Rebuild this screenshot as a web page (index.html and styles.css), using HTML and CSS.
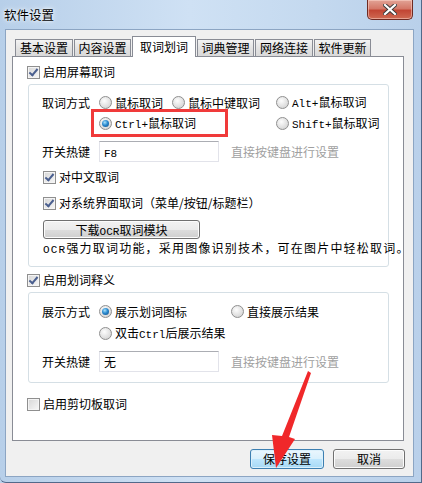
FILE: index.html
```html
<!DOCTYPE html>
<html lang="zh-CN">
<head>
    <meta charset="UTF-8">
    <title>软件设置</title>
    <link rel="stylesheet" href="styles.css">
</head>
<body>

<div class="window">
    <!-- 标题栏 -->
    <div class="titlebar">
        <span class="title">软件设置</span>
        <div class="close">
            <svg width="14" height="11" viewBox="0 0 14 11">
                <path d="M2 1 L12 10 M12 1 L2 10" stroke="#3a3a3a" stroke-width="4" stroke-linecap="square"/>
                <path d="M2 1 L12 10 M12 1 L2 10" stroke="#ffffff" stroke-width="2.2" stroke-linecap="square"/>
            </svg>
        </div>
    </div>

    <div class="client">
        <!-- 选项卡 -->
        <div class="tabs">
            <div class="tab">基本设置</div>
            <div class="tab">内容设置</div>
            <div class="tab active">取词划词</div>
            <div class="tab">词典管理</div>
            <div class="tab">网络连接</div>
            <div class="tab">软件更新</div>
        </div>

        <div class="panel">
            <label class="check top-check"><span class="cb on"></span><span>启用屏幕取词</span></label>

            <!-- 屏幕取词设置 -->
            <div class="group g1">
                <div class="opt-grid grid1">
                    <span class="lbl">取词方式</span>
                    <label class="radio"><span class="rb"></span><span>鼠标取词</span></label>
                    <label class="radio"><span class="rb"></span><span>鼠标中键取词</span></label>
                    <label class="radio"><span class="rb"></span><span><span class="en">Alt+</span>鼠标取词</span></label>
                    <label class="radio span2"><span class="rb on"></span><span><span class="en">Ctrl+</span>鼠标取词</span></label>
                    <label class="radio"><span class="rb"></span><span><span class="en">Shift+</span>鼠标取词</span></label>
                </div>
                <div class="hotkey hk1">
                    <span class="lbl">开关热键</span>
                    <div class="input"><span class="en">F8</span></div>
                    <span class="hint">直接按键盘进行设置</span>
                </div>
                <label class="check sub c1"><span class="cb on"></span><span>对中文取词</span></label>
                <label class="check sub c2"><span class="cb on"></span><span>对系统界面取词（菜单/按钮/标题栏）</span></label>
                <div class="btn ocr-btn">下载<span class="en">OCR</span>取词模块</div>
                <p class="ocr-note"><span class="en">OCR</span>强力取词功能，采用图像识别技术，可在图片中轻松取词。</p>
            </div>

            <label class="check mid-check"><span class="cb on"></span><span>启用划词释义</span></label>

            <!-- 划词释义设置 -->
            <div class="group g2">
                <div class="opt-grid grid2">
                    <span class="lbl">展示方式</span>
                    <label class="radio"><span class="rb on"></span><span>展示划词图标</span></label>
                    <label class="radio"><span class="rb"></span><span>直接展示结果</span></label>
                    <label class="radio span2"><span class="rb"></span><span>双击<span class="en">Ctrl</span>后展示结果</span></label>
                </div>
                <div class="hotkey hk2">
                    <span class="lbl">开关热键</span>
                    <div class="input">无</div>
                    <span class="hint">直接按键盘进行设置</span>
                </div>
            </div>

            <label class="check bottom-check"><span class="cb"></span><span>启用剪切板取词</span></label>
        </div>

        <div class="actions">
            <div class="btn default">保存设置</div>
            <div class="btn">取消</div>
        </div>
    </div>

    <!-- 标注 -->
    <div class="mark"></div>
    <svg class="arrow" width="60" height="110" viewBox="0 0 60 110">
        <polygon points="46,0 49,2 27,66 33,68 14,97 10,64 20,65" fill="#f0282a"/>
    </svg>
</div>

</body>
</html>
```

FILE: styles.css
```css
* {
    box-sizing: border-box;
}
body {
    margin: 0;
    font-family: "Noto Sans CJK SC", "Noto Sans", sans-serif;
    font-size: 12px;
    line-height: 16px;
    color: #000;
    background: #bcd3ec;
}
.en {
    font-family: "Liberation Mono", monospace;
    font-size: 11px;
}
.window {
    position: relative;
    width: 422px;
    height: 483px;
    overflow: hidden;
    background: linear-gradient(to right, #b7cfe9 0%, #cfe1f4 45%, #c4d9ef 75%, #b9d0ea 100%);
    border-right: 1px solid #52698a;
    border-bottom: 1px solid #52698a;
    border-bottom-left-radius: 6px;
}
.titlebar {
    height: 29px;
    display: flex;
    justify-content: space-between;
    align-items: flex-start;
}
.title {
    padding: 7px 0 0 4px;
    font-size: 12.5px;
    text-shadow: 0 0 6px #ffffff, 0 0 3px #ffffff;
}
.close {
    width: 46px;
    height: 20px;
    margin-right: 8px;
    display: flex;
    align-items: center;
    justify-content: center;
    border: 1px solid #6e2a22;
    border-top: none;
    border-radius: 0 0 5px 5px;
    background: linear-gradient(#e2a396 0%, #d47868 45%, #c24634 55%, #cf6a52 100%);
    box-shadow: inset 0 0 0 1px rgba(255, 220, 210, 0.5);
}
.client {
    margin-left: 5px;
    width: 409px;
    height: 448px;
    padding: 6px 8px 0 6px;
    background: #f0f0f0;
    border: 1px solid #8ca5c3;
}

/* 选项卡 */
.tabs {
    display: flex;
    align-items: flex-end;
    gap: 1px;
    height: 20px;
    padding-left: 3px;
}
.tab {
    width: 58px;
    height: 17px;
    line-height: 16px;
    text-align: center;
    border: 1px solid #898c95;
    border-bottom: none;
    background: linear-gradient(#f3f3f3, #e3e3e3 50%, #d9d9d9);
}
.tab:nth-child(2), .tab:nth-child(4), .tab:nth-child(6) {
    width: 57px;
}
.tab.active {
    width: 64px;
    height: 21px;
    line-height: 19px;
    margin-bottom: -1px;
    position: relative;
    z-index: 1;
    background: #fff;
}
.panel {
    width: 392px;
    height: 385px;
    padding: 5px 0 0 14px;
    background: #fff;
    border: 1px solid #898c95;
}

/* 复选框、单选框 */
.check, .radio {
    display: flex;
    align-items: center;
    height: 20px;
    white-space: nowrap;
}
.cb {
    width: 13px;
    height: 13px;
    flex: none;
    margin-right: 3px;
    border: 1px solid #8f8f8f;
    background: linear-gradient(135deg, #d6d6d6, #f7f7f7);
    box-shadow: inset 0 0 0 1px #f4f4f4;
    position: relative;
}
.cb.on::after {
    content: "";
    position: absolute;
    left: 3px;
    top: 0;
    width: 3px;
    height: 7px;
    border: solid #4a5f8f;
    border-width: 0 2px 2px 0;
    transform: rotate(40deg);
}
.rb {
    width: 13px;
    height: 13px;
    flex: none;
    margin-right: 3px;
    border-radius: 50%;
    border: 1px solid #8f8f8f;
    background: radial-gradient(circle at 40% 35%, #fdfdfd, #dadada 70%, #cfcfcf);
    position: relative;
}
.rb.on::after {
    content: "";
    position: absolute;
    left: 2px;
    top: 2px;
    width: 7px;
    height: 7px;
    border-radius: 50%;
    background: radial-gradient(circle at 40% 35%, #a9e2fb, #2a8ad0 45%, #114a80);
}
.mid-check {
    margin-top: 3px;
}
.bottom-check {
    margin-top: 11px;
}

/* 分组框 */
.group {
    width: 361px;
    margin-left: 1px;
    margin-top: 2px;
    padding: 7px 0 8px 13px;
    border: 1px solid #d5dfe5;
    border-radius: 3px;
}
.g2 {
    padding-top: 8px;
    padding-bottom: 10px;
}
.opt-grid {
    display: grid;
    grid-template-rows: 21px 21px;
    align-items: center;
}
.grid1 {
    grid-template-columns: 57px 73px 104px 1fr;
}
.grid2 {
    grid-template-columns: 57px 132px 1fr;
    row-gap: 1px;
}
.lbl {
    white-space: nowrap;
}
.opt-grid .lbl {
    align-self: start;
    line-height: 21px;
}
.opt-grid .span2 {
    grid-column: 2 / 4;
}
.hotkey {
    display: flex;
    align-items: center;
    height: 21px;
    margin-top: 7px;
}
.hotkey .lbl {
    width: 57px;
}
.input {
    width: 120px;
    height: 21px;
    padding-left: 4px;
    line-height: 19px;
    background: #fff;
    border: 1px solid #e2e3ea;
    border-top-color: #abadb3;
}
.hint {
    margin-left: 12px;
    color: #a0a0a0;
}
.sub {
    margin-left: 1px;
}
.c1 {
    margin-top: 5px;
}
.c2 {
    margin-top: 6px;
}

/* 按钮 */
.btn {
    height: 19px;
    line-height: 17px;
    text-align: center;
    border: 1px solid #707070;
    border-radius: 3px;
    background: linear-gradient(#f2f2f2 0%, #ebebeb 50%, #dddddd 51%, #cfcfcf 100%);
    box-shadow: inset 0 0 0 1px #fcfcfc;
}
.ocr-btn {
    width: 157px;
    margin-top: 7px;
    margin-left: 1px;
}
.ocr-note {
    margin: 1px 0 0 1px;
    line-height: 16px;
    letter-spacing: 1.2px;
    white-space: nowrap;
}
.actions {
    display: flex;
    justify-content: flex-end;
    gap: 9px;
    margin-top: 8px;
}
.actions .btn {
    width: 72px;
    height: 20px;
    line-height: 18px;
}
.actions .btn.default {
    width: 74px;
    border-color: #3c7fb1;
    background: linear-gradient(#eaf6fd 0%, #d9f0fc 50%, #bee6fd 51%, #a7d9f5 100%);
    box-shadow: inset 0 0 0 1px #dcf0fb;
}

/* 标注 */
.mark {
    position: absolute;
    left: 91px;
    top: 109px;
    width: 137px;
    height: 28px;
    border: 3px solid #f03a3a;
}
.arrow {
    position: absolute;
    left: 262px;
    top: 371px;
}
```
